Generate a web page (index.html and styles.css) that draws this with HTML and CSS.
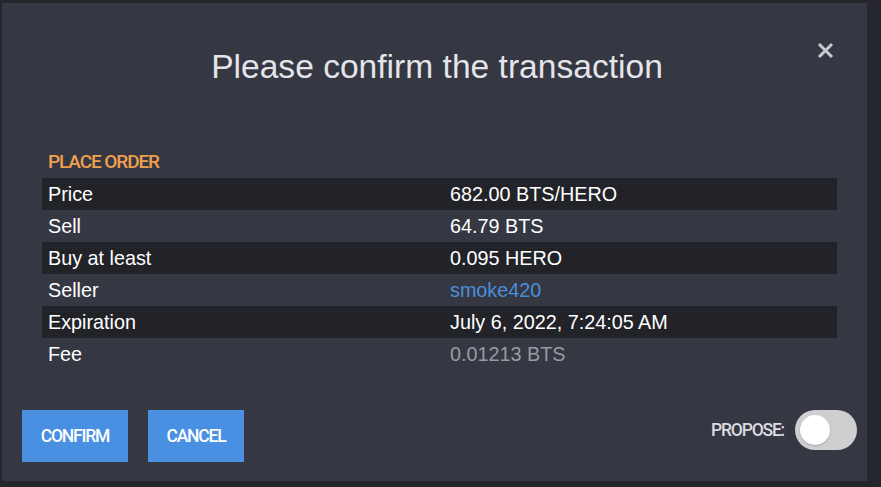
FILE: index.html
```html
<!DOCTYPE html>
<html>
<head>
<meta charset="utf-8">
<link rel="stylesheet" href="styles.css">
</head>
<body>
<div class="modal">
  <button class="close" aria-label="Close">
    <svg width="17" height="17" viewBox="0 0 17 17"><path d="M2 2 L15 15 M15 2 L2 15" stroke="#c9cacf" stroke-width="3" stroke-linecap="butt"/></svg>
  </button>
  <h1 class="title">Please confirm the transaction</h1>
  <div class="content">
    <div class="op-title">PLACE ORDER</div>
    <div class="table">
      <div class="row dark"><span class="key">Price</span><span class="val">682.00 BTS/HERO</span></div>
      <div class="row"><span class="key">Sell</span><span class="val">64.79 BTS</span></div>
      <div class="row dark"><span class="key">Buy at least</span><span class="val">0.095 HERO</span></div>
      <div class="row"><span class="key">Seller</span><span class="val link">smoke420</span></div>
      <div class="row dark"><span class="key">Expiration</span><span class="val">July 6, 2022, 7:24:05 AM</span></div>
      <div class="row"><span class="key">Fee</span><span class="val muted">0.01213 BTS</span></div>
    </div>
  </div>
  <div class="footer">
    <div class="buttons">
      <button class="btn confirm">CONFIRM</button>
      <button class="btn cancel">CANCEL</button>
    </div>
    <div class="propose">
      <span class="propose-label">PROPOSE:</span>
      <span class="toggle"><span class="knob"></span></span>
    </div>
  </div>
</div>
</body>
</html>
```
FILE: styles.css
```css
html, body {
  margin: 0;
  padding: 0;
}
body {
  background: #25262b;
  width: 881px;
  height: 487px;
  overflow: hidden;
  font-family: "Liberation Sans", Arial, sans-serif;
}
.modal {
  position: relative;
  margin: 3px 0 0 2px;
  width: 865px;
  height: 478px;
  background: #353742;
  box-sizing: border-box;
  display: flex;
  flex-direction: column;
}
.close {
  position: absolute;
  top: 39px;
  right: 33px;
  width: 17px;
  height: 17px;
  padding: 0;
  border: 0;
  background: none;
  display: block;
}
.close svg { display: block; }
.title {
  margin: 44px 0 0 5px;
  font-weight: normal;
  font-size: 33.6px;
  line-height: 40px;
  height: 40px;
  color: #e4e4e9;
  text-align: center;
}
.content {
  margin: 63px 30px 0 40px;
}
.op-title {
  font-family: Roboto, sans-serif;
  font-weight: 500;
  font-size: 19px;
  line-height: 24px;
  letter-spacing: -1.1px;
  color: #eea04f;
  padding-left: 6px;
  margin-bottom: 3.5px;
}
.table {
  display: flex;
  flex-direction: column;
}
.row {
  display: flex;
  height: 32px;
  line-height: 32px;
  font-size: 19.8px;
  color: #ffffff;
}
.row.dark {
  background: #222329;
}
.key {
  width: 402px;
  padding-left: 6px;
}
.val.link { color: #4a8fdb; }
.val.muted { color: #9a9ba1; }
.footer {
  margin-top: 40px;
  padding: 0 10px 0 20px;
  display: flex;
  justify-content: space-between;
  align-items: flex-start;
}
.buttons {
  display: flex;
  gap: 20px;
}
.btn {
  height: 52px;
  border: 0;
  background: #4a90e2;
  color: #ffffff;
  font-family: Roboto, sans-serif;
  font-weight: 500;
  font-size: 17.5px;
  letter-spacing: -1.2px;
  padding: 0;
  margin: 0;
}
.confirm { width: 106px; }
.cancel { width: 96px; }
.propose {
  display: flex;
  align-items: center;
  height: 40px;
  gap: 11px;
}
.propose-label {
  font-family: Roboto, sans-serif;
  font-weight: 500;
  font-size: 17.5px;
  letter-spacing: -1.2px;
  color: #dcdce0;
}
.toggle {
  position: relative;
  width: 62px;
  height: 40px;
  border-radius: 20px;
  background: #cfcfd2;
  display: block;
}
.knob {
  position: absolute;
  left: 5px;
  top: 5px;
  width: 30px;
  height: 30px;
  border-radius: 50%;
  background: #ffffff;
  box-shadow: 0 1px 2px rgba(0,0,0,0.2);
}
```
